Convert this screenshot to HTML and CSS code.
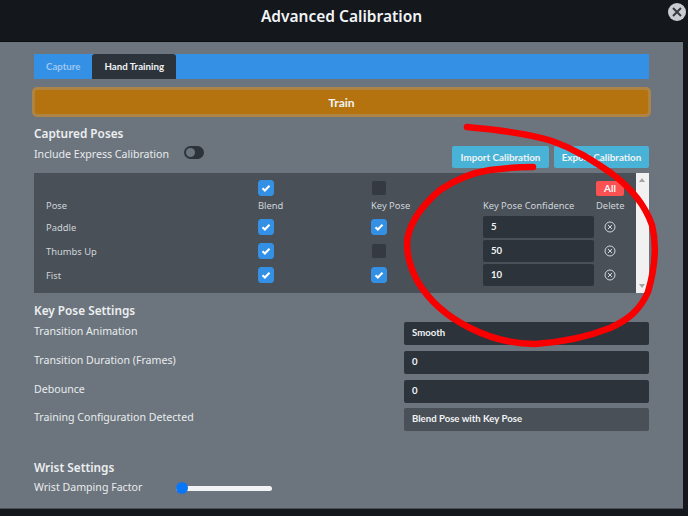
FILE: index.html
```html
<!DOCTYPE html>
<html lang="en">
	<head>
		<meta charset="UTF-8">
		<title>Advanced Calibration</title>
		<link rel="stylesheet" href="styles.css">
	</head>
	<body>
		<div class="modal">
			<header class="modal-header">Advanced Calibration</header>
			<main class="modal-body">
				<div class="tabs">
					<span class="tab">Capture</span>
					<span class="tab active">Hand Training</span>
				</div>
				<button class="train">Train</button>

				<h2 class="captured-title">Captured Poses</h2>
				<div class="capture-bar">
					<div class="express">
						<span>Include Express Calibration</span>
						<span class="toggle"></span>
					</div>
					<div class="actions">
						<button class="info">Import Calibration</button>
						<button class="info">Export Calibration</button>
					</div>
				</div>

				<div class="poses">
					<div class="pose-grid">
						<span></span>
						<span class="check on"><svg viewBox="0 0 16 16"><path d="M4 8.2l2.7 2.6L12 5.4"/></svg></span>
						<span class="check"></span>
						<span></span>
						<button class="all">All</button>

						<span class="head">Pose</span>
						<span class="head">Blend</span>
						<span class="head">Key Pose</span>
						<span class="head">Key Pose Confidence</span>
						<span class="head">Delete</span>

						<span>Paddle</span>
						<span class="check on"><svg viewBox="0 0 16 16"><path d="M4 8.2l2.7 2.6L12 5.4"/></svg></span>
						<span class="check on"><svg viewBox="0 0 16 16"><path d="M4 8.2l2.7 2.6L12 5.4"/></svg></span>
						<span class="field small">5</span>
						<svg class="remove" viewBox="0 0 12 12"><circle cx="6" cy="6" r="5"/><path d="M4 4l4 4M8 4l-4 4"/></svg>

						<span>Thumbs Up</span>
						<span class="check on"><svg viewBox="0 0 16 16"><path d="M4 8.2l2.7 2.6L12 5.4"/></svg></span>
						<span class="check"></span>
						<span class="field small">50</span>
						<svg class="remove" viewBox="0 0 12 12"><circle cx="6" cy="6" r="5"/><path d="M4 4l4 4M8 4l-4 4"/></svg>

						<span>Fist</span>
						<span class="check on"><svg viewBox="0 0 16 16"><path d="M4 8.2l2.7 2.6L12 5.4"/></svg></span>
						<span class="check on"><svg viewBox="0 0 16 16"><path d="M4 8.2l2.7 2.6L12 5.4"/></svg></span>
						<span class="field small">10</span>
						<svg class="remove" viewBox="0 0 12 12"><circle cx="6" cy="6" r="5"/><path d="M4 4l4 4M8 4l-4 4"/></svg>
					</div>
					<div class="scrollbar">
						<span class="arrow up"></span>
						<span class="arrow down"></span>
					</div>
				</div>

				<h2 class="keypose-title">Key Pose Settings</h2>
				<div class="settings">
					<span>Transition Animation</span>
					<span class="field">Smooth</span>
					<span>Transition Duration (Frames)</span>
					<span class="field">0</span>
					<span>Debounce</span>
					<span class="field">0</span>
					<span>Training Configuration Detected</span>
					<span class="field readonly">Blend Pose with Key Pose</span>
				</div>

				<h2 class="wrist-title">Wrist Settings</h2>
				<div class="wrist">
					<span>Wrist Damping Factor</span>
					<input type="range" class="slider" min="0" max="100" value="0">
				</div>
			</main>
		</div>

		<button class="close"><svg viewBox="0 0 18 18"><path d="M5 5l8 8M13 5l-8 8"/></svg></button>

		<!-- hand drawn marker on top of the screenshot -->
		<svg class="scribble" viewBox="0 0 688 516">
			<path d="M467 127C500 130 530 134 552 141C575 149 592 160 611 173C630 187 645 205 652 225C657 245 655 268 648 292C640 310 628 320 610 328C590 336 565 342 535 344C510 344 490 338 470 328C450 318 430 302 418 282C410 268 405 250 408 236C412 218 425 203 440 190C455 180 470 173 490 170C505 168 520 167 533 167"/>
		</svg>
	</body>
</html>
```

FILE: styles.css
```css
html, body {
	margin: 0;
	padding: 0;
	height: 100%;
	overflow: hidden;
	background-color: #14181c;
	font-family: "Noto Sans", sans-serif;
	font-size: 10.6px;
	color: #e9ecef;
}

.modal {
	width: 683px;
}

.modal-header {
	height: 41px;
	line-height: 33px;
	text-align: center;
	font-size: 15.5px;
	font-weight: 600;
	color: #f1f3f5;
	border-bottom: 1px solid #0c0e10;
}

.modal-body {
	box-sizing: border-box;
	height: 467px;
	padding: 12px 34px 0;
	background-color: #6c757d;
	border-bottom: 1px solid #495057;
}

.tabs {
	display: flex;
	height: 25px;
	background-color: #3390e4;
}

.tab {
	padding: 0 12px;
	line-height: 25px;
	font-family: Lato, sans-serif;
	font-size: 9.7px;
	font-weight: 700;
	color: #9cc9f2;
}

.tab.active {
	color: #f1f3f5;
	background-color: #2c333a;
	border-radius: 3px 3px 0 0;
}

.train {
	display: block;
	box-sizing: border-box;
	width: 619px;
	height: 30px;
	margin: 8px -2px 0;
	padding: 0;
	border: 3px solid #ad8443;
	border-radius: 5px;
	background-color: #b5730f;
	font: 700 12px Lato, sans-serif;
	color: #f1f3f5;
}

h2 {
	margin: 0;
	font-size: 11.8px;
	line-height: 16px;
	font-weight: 600;
	color: #eceff1;
}

.captured-title {
	margin-top: 8px;
}

.capture-bar {
	display: flex;
	justify-content: space-between;
	height: 22px;
	margin-top: 0;
	margin-bottom: 10px;
}

.express {
	display: flex;
	gap: 15px;
	height: 16px;
	line-height: 16px;
	margin-top: 5px;
}

.toggle {
	box-sizing: border-box;
	width: 20px;
	height: 13px;
	padding: 2px;
	border-radius: 7px;
	background-color: #2c333a;
}

.toggle::before {
	content: "";
	display: block;
	width: 9px;
	height: 9px;
	border-radius: 50%;
	background-color: #6c757d;
}

.actions {
	display: flex;
	gap: 5px;
	margin-top: 5px;
}

.info {
	box-sizing: border-box;
	height: 22px;
	padding: 0;
	width: 97px;
	border: 0;
	border-radius: 2px;
	background-color: #48b3d6;
	font: 700 9.8px Lato, sans-serif;
	color: #f1f3f5;
}

.info + .info {
	width: 95px;
}

.poses {
	display: flex;
	justify-content: space-between;
	height: 120px;
	background-color: #495057;
}

.pose-grid {
	display: grid;
	grid-template-columns: 212px 113px 112px 113px 28px;
	grid-template-rows: 22px 16px 24px 24px 24px;
	align-items: center;
	padding: 4px 0 0 12px;
	color: #ced4da;
	font-size: 9.4px;
}

.head {
	align-self: start;
	line-height: 14px;
}

.check {
	display: block;
	box-sizing: border-box;
	width: 16px;
	height: 16px;
	border-radius: 3px;
	background-color: #343a40;
	border: 1px solid #495057;
}

.check.on {
	background-color: #3390e4;
	border-color: #3390e4;
}

.check svg {
	display: block;
	width: 14px;
	height: 14px;
	fill: none;
	stroke: #fff;
	stroke-width: 2.4;
}

.field {
	box-sizing: border-box;
	display: block;
	height: 23px;
	line-height: 22px;
	padding: 0 8px;
	border-radius: 2px;
	background-color: #2c333a;
	font-family: Lato, sans-serif;
	font-size: 9.6px;
	font-weight: 700;
	color: #f1f3f5;
}

.field.small {
	width: 111px;
	height: 22px;
}

.field.readonly {
	background-color: #495057;
}

.all {
	justify-self: start;
	width: 28px;
	height: 15px;
	padding: 0;
	border: 0;
	border-radius: 2px;
	background-color: #fa5252;
	font: 700 10px/15px Lato, sans-serif;
	color: #f8f9fa;
}

.remove {
	justify-self: center;
	width: 12px;
	height: 12px;
	fill: none;
	stroke: #ced4da;
	stroke-width: 1;
}

.scrollbar {
	position: relative;
	width: 13px;
	background-color: #f1f1f1;
}

.arrow {
	position: absolute;
	left: 3px;
	width: 0;
	height: 0;
	border-left: 3px solid transparent;
	border-right: 3px solid transparent;
}

.arrow.up {
	top: 5px;
	border-bottom: 4px solid #a3a3a3;
}

.arrow.down {
	bottom: 5px;
	border-top: 4px solid #a3a3a3;
}

.keypose-title {
	margin-top: 9px;
}

.settings {
	display: grid;
	grid-template-columns: 370px 245px;
	grid-template-rows: 23px 23px 22px 23px;
	row-gap: 6px;
	margin-top: 4px;
	line-height: 18px;
}

.wrist-title {
	margin-top: 28px;
}

.wrist {
	display: flex;
	align-items: center;
	gap: 34px;
	margin-top: 4px;
	line-height: 16px;
}

.slider {
	-webkit-appearance: none;
	appearance: none;
	width: 96px;
	height: 5px;
	margin: 2px 0 0;
	border-radius: 3px;
	border: 0;
	background-color: #f1f3f5;
}

.slider::-webkit-slider-thumb {
	-webkit-appearance: none;
	width: 12px;
	height: 12px;
	border-radius: 50%;
	background-color: #0a75f5;
}

.close {
	position: absolute;
	top: 3px;
	left: 668px;
	width: 18px;
	height: 18px;
	padding: 0;
	border: 0;
	border-radius: 50%;
	background-color: #c9cdd1;
}

.close svg {
	display: block;
	fill: none;
	stroke: #343a40;
	stroke-width: 2;
}

.scribble {
	position: absolute;
	top: 0;
	left: 0;
	width: 688px;
	height: 516px;
	fill: none;
	stroke: #f80000;
	stroke-width: 6.5;
	stroke-linecap: round;
	pointer-events: none;
}
```
